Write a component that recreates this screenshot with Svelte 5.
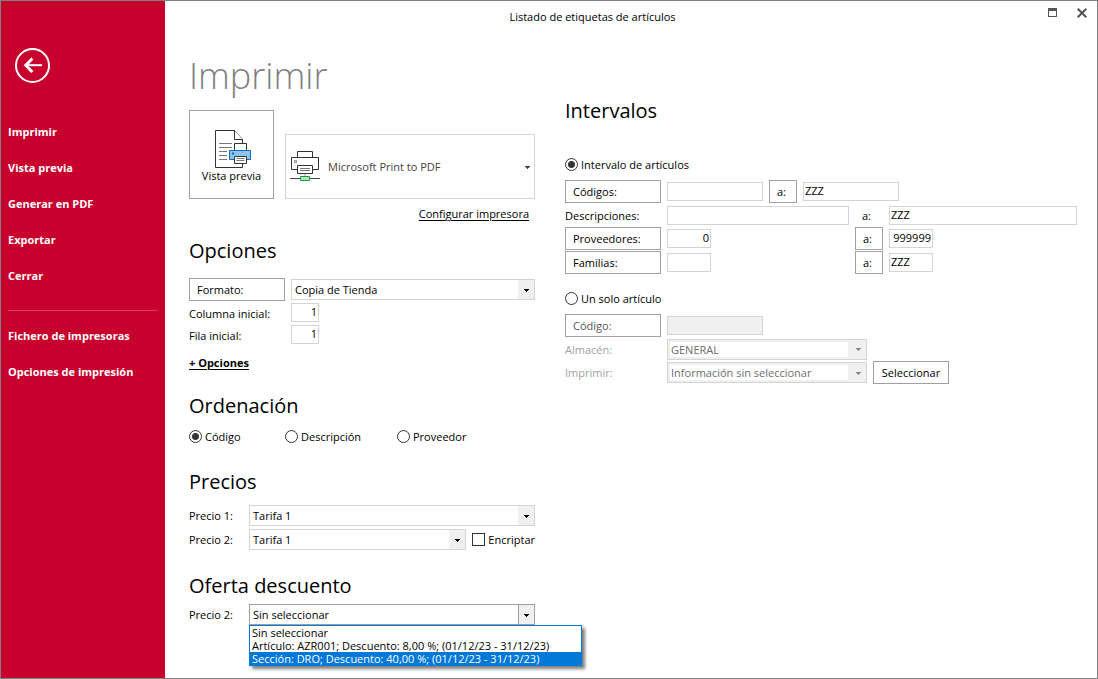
<script lang="ts">
  // Print backstage for the article label listing.
  const actions = ['Imprimir', 'Vista previa', 'Generar en PDF', 'Exportar', 'Cerrar'];
  const settings = ['Fichero de impresoras', 'Opciones de impresión'];

  const offers = [
    'Sin seleccionar',
    'Artículo: AZR001; Descuento: 8,00 %; (01/12/23 - 31/12/23)',
    'Sección: DRO; Descuento: 40,00 %; (01/12/23 - 31/12/23)',
  ];

  let order = $state('Código');
  let scope = $state('interval');
  let offer = $state(0);
  let hovered = $state(2);
  let offersOpen = $state(true);

  function pickOffer(i: number) {
    offer = i;
    offersOpen = false;
  }
</script>

{#snippet arrow()}
  <svg class="arrow" width="5" height="3" viewBox="0 0 5 3" aria-hidden="true">
    <path d="M0 0h5v1h-1v1h-1v1h-1v-1h-1v-1h-1z" fill="currentColor" />
  </svg>
{/snippet}

<div class="window">
  <aside>
    <button type="button" class="back" aria-label="Volver">
      <svg width="35" height="35" viewBox="0 0 35 35" fill="none" stroke="#fff">
        <circle cx="17.5" cy="17.5" r="16.5" stroke-width="2" />
        <path d="M10.5 17.2H27" stroke-width="2" />
        <path d="M17.3 10.5L10.8 17.2l6.5 6.8" stroke-width="3" />
      </svg>
    </button>
    <nav>
      {#each actions as item}
        <button type="button">{item}</button>
      {/each}
      <hr />
      {#each settings as item}
        <button type="button">{item}</button>
      {/each}
    </nav>
  </aside>

  <div class="page">
    <header>
      <span class="title">Listado de etiquetas de artículos</span>
      <div class="controls">
        <button type="button" aria-label="Maximizar">
          <svg width="9" height="9" viewBox="0 0 9 9"><path d="M0 0h9v9H0zM1 3v5h7V3z" fill="#555" fill-rule="evenodd" /></svg>
        </button>
        <button type="button" aria-label="Cerrar ventana">
          <svg width="10" height="10" viewBox="0 0 10 10"><path d="M.7.7l8.6 8.6M9.3.7L.7 9.3" stroke="#555" stroke-width="2" /></svg>
        </button>
      </div>
    </header>

    <main>
      <div class="left">
        <h1>Imprimir</h1>

        <div class="target">
          <button type="button" class="preview">
            <svg width="38" height="39" viewBox="0 0 38 39" fill="#fff" stroke="#333">
              <path d="M.5 .5H19.5L27.5 9.5V37.5H.5z" />
              <path d="M19.5 .5V9.5H27.5" />
              <path d="M4 13.5H17M4 17.5H17M4 21.5H12M4 25.5H12M4 29.5H12" stroke="#777" />
              <path d="M19.5 13.5H31.5V21H19.5z" />
              <path d="M14.5 20.5H35.5V29.5H14.5z" fill="#8cc4ee" stroke="#1469b5" />
              <path d="M17 22.5h2v2h-2z" fill="#1469b5" stroke="none" />
              <path d="M19.5 26.5H31.5V33.5H19.5z" />
              <path d="M21.5 28.5H29.5M21.5 30.5H29.5" stroke="#777" />
            </svg>
            Vista previa
          </button>
          <div class="combo printer">
            <svg class="device" width="30" height="31" viewBox="0 0 30 31" fill="#fff" stroke="#333">
              <path d="M7.5 .5H22.5V6.5H7.5z" />
              <path d="M1.5 6.5H28.5V18.5H1.5z" />
              <path d="M4.5 9.5h2v2h-2z" stroke="#888" />
              <path d="M7.5 14.5H22.5V22.5H7.5z" />
              <path d="M10 17.5H20M10 19.5H20" stroke="#777" />
              <path d="M15 23V25" stroke="#aaa" />
              <path d="M0 27.5H30" stroke="#444" />
              <path d="M10.5 25.5H19.5V29.5H10.5z" fill="#b5e3bd" stroke="#159a3c" />
            </svg>
            <select aria-label="Impresora"><option>Microsoft Print to PDF</option></select>
            {@render arrow()}
          </div>
        </div>
        <a class="configure" href="#configurar">Configurar impresora</a>

        <section class="options">
          <h2>Opciones</h2>
          <div class="row">
            <button type="button" class="field">Formato:</button>
            <div class="combo">
              <select aria-label="Formato"><option>Copia de Tienda</option></select>
              {@render arrow()}
            </div>
          </div>
          <div class="row short">
            <label for="col">Columna inicial:</label>
            <input id="col" class="tiny num" value="1" />
          </div>
          <div class="row short">
            <label for="fila">Fila inicial:</label>
            <input id="fila" class="tiny num" value="1" />
          </div>
          <a class="more" href="#opciones">+ Opciones</a>
        </section>

        <section class="order">
          <h2>Ordenación</h2>
          <div class="radios">
            {#each ['Código', 'Descripción', 'Proveedor'] as name}
              <label class="check"><input type="radio" value={name} bind:group={order} />{name}</label>
            {/each}
          </div>
        </section>

        <section class="prices">
          <h2>Precios</h2>
          <div class="row">
            <label for="p1">Precio 1:</label>
            <div class="combo">
              <select id="p1"><option>Tarifa 1</option></select>
              {@render arrow()}
            </div>
          </div>
          <div class="row">
            <label for="p2">Precio 2:</label>
            <div class="combo">
              <select id="p2"><option>Tarifa 1</option></select>
              {@render arrow()}
            </div>
            <label class="check"><input type="checkbox" />Encriptar</label>
          </div>
        </section>

        <section class="offer">
          <h2>Oferta descuento</h2>
          <div class="row">
            <span class="label" id="offer-label">Precio 2:</span>
            <div class="combo open">
              <button
                type="button"
                class="value"
                aria-labelledby="offer-label"
                aria-haspopup="listbox"
                aria-expanded={offersOpen}
                onclick={() => (offersOpen = !offersOpen)}
              >
                {offers[offer]}
              </button>
              {@render arrow()}
              {#if offersOpen}
                <div class="menu" role="listbox" aria-labelledby="offer-label">
                  {#each offers as text, i}
                    <button
                      type="button"
                      role="option"
                      aria-selected={i === hovered}
                      onmouseenter={() => (hovered = i)}
                      onclick={() => pickOffer(i)}
                    >
                      {text}
                    </button>
                  {/each}
                </div>
              {/if}
            </div>
          </div>
        </section>
      </div>

      <div class="right">
        <h2>Intervalos</h2>

        <label class="check scope"><input type="radio" value="interval" bind:group={scope} />Intervalo de artículos</label>
        <div class="fields">
          <div class="row">
            <button type="button" class="field">Códigos:</button>
            <input class="code" aria-label="Código desde" />
            <button type="button" class="to">a:</button>
            <input class="code" aria-label="Código hasta" value="ZZZ" />
          </div>
          <div class="row">
            <label for="desc-from">Descripciones:</label>
            <div class="from"><input id="desc-from" class="wide" /></div>
            <label class="to plain" for="desc-to">a:</label>
            <input id="desc-to" class="wide" value="ZZZ" />
          </div>
          <div class="row">
            <button type="button" class="field">Proveedores:</button>
            <div class="from"><input class="small num" aria-label="Proveedor desde" value="0" /></div>
            <button type="button" class="to">a:</button>
            <input class="small num" aria-label="Proveedor hasta" value="999999" />
          </div>
          <div class="row">
            <button type="button" class="field">Familias:</button>
            <div class="from"><input class="small" aria-label="Familia desde" /></div>
            <button type="button" class="to">a:</button>
            <input class="small" aria-label="Familia hasta" value="ZZZ" />
          </div>
        </div>

        <label class="check scope"><input type="radio" value="single" bind:group={scope} />Un solo artículo</label>
        <div class="fields">
          <div class="row">
            <button type="button" class="field dim">Código:</button>
            <input class="code" aria-label="Código" disabled />
          </div>
          <div class="row">
            <label class="off" for="store">Almacén:</label>
            <div class="combo">
              <select id="store" disabled><option>GENERAL</option></select>
              {@render arrow()}
            </div>
          </div>
          <div class="row">
            <label class="off" for="what">Imprimir:</label>
            <div class="combo">
              <select id="what" disabled><option>Información sin seleccionar</option></select>
              {@render arrow()}
            </div>
            <button type="button" class="select">Seleccionar</button>
          </div>
        </div>
      </div>
    </main>
  </div>
</div>

<style>
  :global(body) {
    background: #fff;
  }

  .window {
    display: flex;
    box-sizing: border-box;
    min-height: 100vh;
    border: 1px solid #808080;
    font: 11px/15px 'Open Sans', 'Noto Sans', sans-serif;
    color: #000;
  }
  .window * {
    box-sizing: border-box;
  }
  button,
  input,
  select {
    margin: 0;
    font: inherit;
    color: inherit;
  }
  button {
    padding: 0;
    border: 0;
    background: none;
    white-space: nowrap;
  }

  aside {
    flex: 0 0 164px;
    padding: 47px 8px 0 7px;
    background: #c8002d;
    color: #fff;
  }
  .back {
    display: block;
    margin: 0 0 30px 7px;
  }
  .back svg {
    display: block;
  }
  nav {
    display: flex;
    flex-direction: column;
  }
  nav button {
    height: 36px;
    font-weight: 700;
    text-align: left;
  }
  hr {
    width: 100%;
    height: 1px;
    margin: 17px 0 6px;
    border: 0;
    background: #d9405f;
  }

  .page {
    flex: 1;
    min-width: 0;
  }
  header {
    display: flex;
    align-items: center;
    height: 30px;
  }
  .title {
    flex: 1;
    text-align: center;
  }
  .controls {
    display: flex;
    justify-content: flex-end;
    align-items: center;
    gap: 20px;
    width: 77px;
    height: 23px;
    padding-right: 10px;
    align-self: flex-start;
  }
  .controls svg {
    display: block;
  }

  main {
    display: grid;
    grid-template-columns: 346px minmax(0, 1fr);
    gap: 30px;
    padding: 0 20px 0 24px;
  }
  h1,
  h2 {
    margin: 0;
    font-weight: 400;
  }
  h1 {
    margin-top: 19px;
    font-size: 36px;
    font-weight: 300;
    line-height: 52px;
    color: #808080;
  }
  h2 {
    font-size: 20px;
    line-height: 30px;
  }

  .target {
    display: flex;
    align-items: flex-end;
    gap: 11px;
    margin-top: 8px;
  }
  .preview {
    display: flex;
    flex-direction: column;
    align-items: center;
    justify-content: center;
    width: 85px;
    height: 89px;
    padding-top: 2px;
    border: 1px solid #a0a0a0;
    line-height: 13px;
  }
  .preview svg {
    margin-left: 4px;
  }
  .configure {
    display: block;
    margin: 6px 6px 0 0;
    line-height: 18px;
    text-align: right;
  }
  a {
    color: inherit;
    text-underline-offset: 2px;
  }
  .more {
    display: inline-block;
    margin-top: 10px;
    font-weight: 700;
  }

  .row {
    display: flex;
    align-items: center;
    gap: 6px;
  }
  .field,
  .to,
  .select {
    height: 23px;
    border: 1px solid #a0a0a0;
    text-align: left;
  }
  .field {
    flex: 0 0 96px;
    padding-left: 7px;
  }
  .to {
    flex: 0 0 28px;
    padding-left: 7px;
  }
  .plain {
    height: auto;
    border: 0;
  }
  .select {
    width: 76px;
    text-align: center;
  }
  input:not([type='radio'], [type='checkbox']) {
    height: 19px;
    padding: 0 1px 2px;
    border: 1px solid #d4d4d4;
    background: #fff;
  }
  input:not([type='radio'], [type='checkbox']):disabled {
    background: #f0f0f0;
  }
  .num {
    text-align: right;
  }
  .tiny {
    width: 28px;
  }
  .small {
    width: 44px;
  }
  .code {
    width: 96px;
  }
  .wide {
    flex: 1;
    width: 100%;
    min-width: 0;
  }

  .combo {
    position: relative;
    flex: 1;
    height: 21px;
  }
  .combo select,
  .value {
    display: block;
    width: 100%;
    height: 100%;
    padding: 0 20px 0 3px;
    border: 1px solid #d4d4d4;
    border-radius: 0;
    appearance: none;
    background: linear-gradient(#f0f0f0, #f0f0f0) right / 16px 100% no-repeat #fff;
    text-align: left;
  }
  .combo select:disabled {
    border: 1px solid #d4d4d4;
    background: linear-gradient(#fff, #fff) 2px 2px / calc(100% - 20px) calc(100% - 4px) no-repeat #f0f0f0;
    color: #6d6d6d;
    opacity: 1;
  }
  .combo select:disabled + .arrow {
    color: #888;
  }
  .arrow {
    position: absolute;
    top: 50%;
    right: 6px;
    margin-top: -1px;
    pointer-events: none;
  }
  .printer {
    height: 65px;
    color: #444;
  }
  .printer select {
    padding-left: 42px;
    background: #fff;
  }
  .printer .arrow {
    right: 5px;
  }
  .device {
    position: absolute;
    left: 5px;
    top: 17px;
    pointer-events: none;
  }
  .open .value {
    border-color: #a0a0a0;
    background-image: linear-gradient(to right, #a0a0a0 1px, #f0f0f0 1px);
  }
  .menu {
    position: absolute;
    top: 100%;
    left: 0;
    z-index: 1;
    width: 333px;
    border: 1px solid #0078d7;
    background: #fff;
    box-shadow: 3px 3px 3px rgba(0, 0, 0, 0.5);
  }
  .menu button {
    display: block;
    width: 100%;
    padding-left: 2px;
    line-height: 13px;
    text-align: left;
  }
  .menu button[aria-selected='true'] {
    background: #0078d7;
    color: #fff;
  }

  .options {
    margin-top: 13px;
  }
  .options h2 {
    margin-bottom: 12px;
  }
  .options label {
    width: 96px;
    padding-top: 2px;
  }
  .short {
    height: 22px;
  }
  .order {
    margin-top: 21px;
  }
  .radios {
    display: grid;
    grid-template-columns: 96px 112px auto;
    margin-top: 8px;
  }
  .prices {
    margin-top: 23px;
  }
  .prices h2 {
    margin-bottom: 8px;
  }
  .prices .row + .row {
    margin-top: 3px;
  }
  .prices .row > label:first-child,
  .label {
    width: 54px;
  }
  .offer {
    margin-top: 21px;
  }
  .offer h2 {
    margin-bottom: 3px;
  }

  .check {
    display: flex;
    align-items: center;
    gap: 3px;
  }
  .check input {
    appearance: none;
    width: 13px;
    height: 13px;
    border: 1px solid #333;
    background: #fff;
  }
  .check input[type='radio'] {
    border-radius: 50%;
  }
  .check input[type='radio']:checked {
    background: radial-gradient(circle, #333 3px, #fff 4px);
  }
  .check input[type='checkbox']:checked {
    background: #333;
    box-shadow: inset 0 0 0 2px #fff;
  }

  .right h2 {
    margin-top: 65px;
  }
  .scope {
    margin-top: 17px;
  }
  h2 + .scope {
    margin-top: 31px;
  }
  .fields {
    display: flex;
    flex-direction: column;
    gap: 1px;
    margin-top: 8px;
  }
  .fields .row {
    min-height: 22px;
  }
  .fields .row > label:first-child {
    flex: 0 0 96px;
  }
  .from {
    display: flex;
    flex: 0 0 182px;
  }
  .fields .combo {
    flex: 0 0 200px;
  }
  .dim {
    color: #555;
  }
  .off {
    color: #a0a0a0;
  }
</style>
